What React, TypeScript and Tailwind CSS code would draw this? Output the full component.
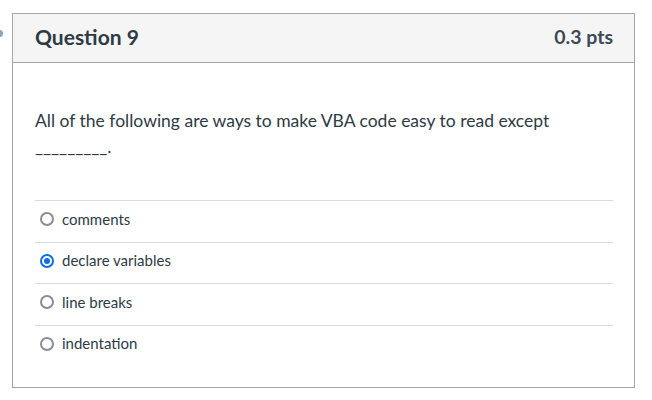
export default function App() {
  const options = [
    { id: 'a', label: 'comments', checked: false },
    { id: 'b', label: 'declare variables', checked: true },
    { id: 'c', label: 'line breaks', checked: false },
    { id: 'd', label: 'indentation', checked: false },
  ];

  return (
    <div
      className="relative w-[652px] h-[400px] bg-white text-[#2d3b45]"
      style={{ fontFamily: 'Lato, "Noto Sans", sans-serif' }}
    >
      {/* partial marker at the left edge */}
      <div className="absolute left-[-4px] top-[30px] w-[7px] h-[7px] rounded-full bg-[#8ea2b8]" />

      <div className="absolute left-[12px] top-[13px] w-[623px] h-[375px] border border-[#a5a5a5] flex flex-col">
        {/* Header */}
        <div className="h-[49px] shrink-0 bg-[#f5f5f5] border-b border-[#a5a5a5] flex items-center justify-between pl-[22px] pr-[21px] pb-[3px]">
          <h2 className="text-[21px] font-bold leading-none">Question 9</h2>
          <span className="text-[19.5px] font-bold leading-none text-[#3d4a55]">0.3 pts</span>
        </div>

        {/* Body */}
        <div className="pl-[22px] pr-[21px] pt-[45px]">
          <p className="text-[17.5px] leading-[26px]">
            All of the following are ways to make VBA code easy to read except
            <br />
            _________.
          </p>

          <div className="mt-[40px]">
            {options.map((opt) => (
              <div
                key={opt.id}
                className="h-[41.5px] border-t border-[#dadada] flex items-center gap-[8px] pl-[5px] pb-[4px]"
              >
                {opt.checked ? (
                  <span className="w-[14px] h-[14px] rounded-full border-2 border-[#0b6ee6] flex items-center justify-center">
                    <span className="w-[6px] h-[6px] rounded-full bg-[#0b6ee6]" />
                  </span>
                ) : (
                  <span className="w-[14px] h-[14px] rounded-full border-2 border-[#8b8b95]" />
                )}
                <span className="text-[15px] leading-none">{opt.label}</span>
              </div>
            ))}
          </div>
        </div>
      </div>
    </div>
  );
}
